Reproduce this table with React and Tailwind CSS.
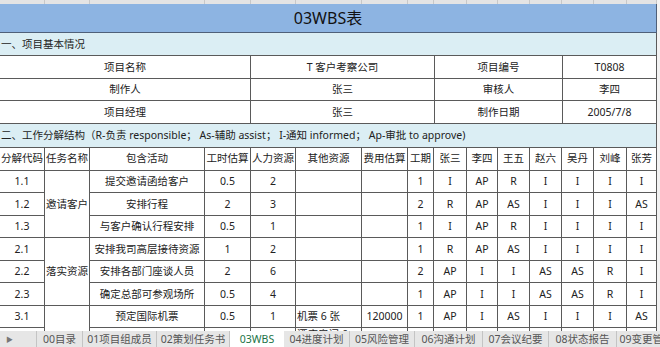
const COLS = 'grid grid-cols-[45px_45px_115px_46px_45px_66px_46px_26px_33px_31px_32px_32px_32px_33px_30px]';
const LINE = 'border-[#5a5a5a]';

const headers = ['分解代码', '任务名称', '包含活动', '工时估算', '人力资源', '其他资源', '费用估算', '工期', '张三', '李四', '王五', '赵六', '吴丹', '刘峰', '张芳'];

// code, activity, hours, people, other, cost, days, raci x7
const rows = [
  ['1.1', '提交邀请函给客户', '0.5', '2', '', '', '1', ['I', 'AP', 'R', 'I', 'I', 'I', 'I']],
  ['1.2', '安排行程', '2', '3', '', '', '2', ['R', 'AP', 'AS', 'I', 'I', 'I', 'AS']],
  ['1.3', '与客户确认行程安排', '0.5', '1', '', '', '1', ['I', 'AP', 'R', 'I', 'I', 'I', 'I']],
  ['2.1', '安排我司高层接待资源', '1', '2', '', '', '1', ['R', 'AP', 'AS', 'I', 'I', 'I', 'I']],
  ['2.2', '安排各部门座谈人员', '2', '6', '', '', '2', ['AP', 'I', 'I', 'AS', 'AS', 'R', 'I']],
  ['2.3', '确定总部可参观场所', '0.5', '4', '', '', '1', ['AP', 'I', 'I', 'AS', 'AS', 'R', 'I']],
  ['3.1', '预定国际机票', '0.5', '1', '机票 6 张', '120000', '1', ['AP', 'I', 'AS', 'I', 'I', 'I', 'AS']],
];

const tasks = { 0: '邀请客户', 3: '落实资源', 6: '' };

const tabs = [
  { label: '00目录', w: 'w-[46px]' },
  { label: '01项目组成员', w: 'w-[74px]' },
  { label: '02策划任务书', w: 'w-[73px]' },
  { label: '03WBS', w: 'w-[54px]', active: true },
  { label: '04进度计划', w: 'w-[66px]' },
  { label: '05风险管理', w: 'w-[65px]' },
  { label: '06沟通计划', w: 'w-[68px]' },
  { label: '07会议纪要', w: 'w-[66px]' },
  { label: '08状态报告', w: 'w-[68px]' },
  { label: '09变更管理', w: 'w-[60px]' },
];

function Cell({ children, className = '' }) {
  return (
    <div className={`flex items-center justify-center border-r border-b ${LINE} whitespace-nowrap overflow-hidden ${className}`}>
      {children}
    </div>
  );
}

export default function App() {
  return (
    <div className="w-[660px] h-[347px] overflow-hidden bg-[#f3f3f3] flex flex-col text-[10.5px] leading-none text-[#222] [font-family:'Noto_Sans','Noto_Sans_CJK_SC',sans-serif]">
      <div className="h-[331px] shrink-0 overflow-hidden">
        <div className="w-[657px] bg-white">
          {/* column header remnants */}
          <div className={`${COLS} h-[4px] bg-[#e4e4e4]`}>
            {headers.map((h) => (
              <div key={h} className="border-r border-[#c8c8c8]" />
            ))}
          </div>

          {/* title */}
          <div className="h-[29px] bg-[#8db4e2] border-b border-r border-[#4f6079] flex items-center justify-center text-[16px] text-[#111]">
            03WBS表
          </div>

          {/* section 1 */}
          <div className={`h-[23px] bg-[#dbeef4] border-b border-r ${LINE} flex items-center pl-[1px]`}>
            一、项目基本情况
          </div>
          <div className="grid grid-cols-[251px_184px_128px_94px] auto-rows-[22.5px]">
            <Cell>项目名称</Cell>
            <Cell>T 客户考察公司</Cell>
            <Cell>项目编号</Cell>
            <Cell>T0808</Cell>
            <Cell>制作人</Cell>
            <Cell>张三</Cell>
            <Cell>审核人</Cell>
            <Cell>李四</Cell>
            <Cell>项目经理</Cell>
            <Cell>张三</Cell>
            <Cell>制作日期</Cell>
            <Cell>2005/7/8</Cell>
          </div>

          {/* section 2 */}
          <div className={`h-[24px] bg-[#dbeef4] border-b border-r ${LINE} flex items-center pl-[1px] whitespace-nowrap`}>
            二、工作分解结构（R-负责 responsible； As-辅助 assist； I-通知 informed； Ap-审批 to approve)
          </div>
          <div className={`${COLS} h-[23px]`}>
            {headers.map((h) => (
              <Cell key={h}>{h}</Cell>
            ))}
          </div>

          <div className={`${COLS} auto-rows-[22.5px]`}>
            {rows.map(([code, act, hrs, ppl, other, cost, days, raci], i) => (
              <div key={code} className="contents">
                <Cell className="col-start-1">{code}</Cell>
                {tasks[i] !== undefined && (
                  <Cell className={i === 6 ? 'col-start-2 row-span-2' : 'col-start-2 row-span-3'}>{tasks[i]}</Cell>
                )}
                <Cell className="col-start-3">{act}</Cell>
                <Cell>{hrs}</Cell>
                <Cell>{ppl}</Cell>
                <Cell className="justify-start pl-[1px]">{other}</Cell>
                <Cell>{cost}</Cell>
                <Cell>{days}</Cell>
                {raci.map((r, j) => (
                  <Cell key={j}>{r}</Cell>
                ))}
              </div>
            ))}
            {/* partially visible next row */}
            <Cell className="col-start-1" />
            <Cell className="col-start-3" />
            <Cell />
            <Cell />
            <Cell className="items-start justify-start pl-[1px] pt-[1px]">酒店房间 6</Cell>
            <Cell />
            <Cell />
            {[0, 1, 2, 3, 4, 5, 6].map((j) => (
              <Cell key={j} />
            ))}
          </div>
        </div>
      </div>

      {/* sheet tabs */}
      <div className="h-[16px] shrink-0 bg-[#e6e6e6] flex items-stretch text-[#555] whitespace-nowrap overflow-hidden">
        <div className="w-[37px] shrink-0 flex items-center pl-[6px] text-[7px] text-[#777] border-r border-[#c4c4c4]">▶</div>
        {tabs.map((t) => (
          <div
            key={t.label}
            className={`${t.w} shrink-0 flex items-center justify-center ${
              t.active ? 'bg-white text-[#217346]' : 'border-r border-[#c4c4c4]'
            }`}
          >
            {t.label}
          </div>
        ))}
      </div>
    </div>
  );
}
